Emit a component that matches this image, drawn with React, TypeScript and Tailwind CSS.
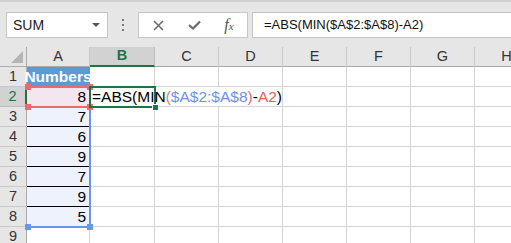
import React from 'react'

const cols = ['A', 'B', 'C', 'D', 'E', 'F', 'G', 'H']
const colW = ['w-[63px]', 'w-[65px]', 'w-[64px]', 'w-[64px]', 'w-[64px]', 'w-[64px]', 'w-[64px]', 'w-[64px]']
const values = ['Numbers', '8', '7', '6', '9', '7', '9', '5', '']

const font = { fontFamily: '"Liberation Sans", Arial, sans-serif' }

function FormulaText() {
  return (
    <span className="whitespace-nowrap text-black">
      =ABS(MIN<span className="text-[#e9785e]">(</span>
      <span className="text-[#6d8ff0]">$A$2:$A$8</span>
      <span className="text-[#e8637a]">)</span>-<span className="text-[#ec5a5f]">A2</span>)
    </span>
  )
}

export default function App() {
  return (
    <div className="h-[243px] w-[511px] overflow-hidden bg-white" style={font}>
      {/* formula bar */}
      <div className="flex h-[47px] items-start border-t-2 border-[#d0d0d0] bg-[#e6e6e6] pt-[10px]">
        <div className="ml-[6px] flex h-[26px] w-[102px] items-center justify-between border border-[#c6c6c6] bg-white pl-[6px] pr-[7px] text-[14px] text-[#222]">
          <span>SUM</span>
          <span className="h-0 w-0 border-x-[4px] border-t-[4px] border-x-transparent border-t-[#555]" />
        </div>
        <div className="flex h-[26px] w-[30px] flex-col items-center justify-center gap-[3px]">
          <span className="h-[2px] w-[2px] bg-[#777]" />
          <span className="h-[2px] w-[2px] bg-[#777]" />
          <span className="h-[2px] w-[2px] bg-[#777]" />
        </div>
        <div className="flex h-[26px] w-[110px] items-center border border-[#c6c6c6] bg-white">
          <div className="flex w-[38px] justify-center">
            <svg width="11" height="11" viewBox="0 0 11 11">
              <path d="M1 1 L10 10 M10 1 L1 10" stroke="#6a6a6a" strokeWidth="1.5" />
            </svg>
          </div>
          <div className="flex w-[34px] justify-center">
            <svg width="13" height="10" viewBox="0 0 13 10">
              <path d="M1 5 L5 8.5 L12 1.5" stroke="#6a6a6a" strokeWidth="2.2" fill="none" />
            </svg>
          </div>
          <div className="flex w-[36px] justify-center">
            <span className="text-[16px] italic text-[#555]" style={{ fontFamily: '"Liberation Serif", serif' }}>
              f<span className="text-[11px]">x</span>
            </span>
          </div>
        </div>
        <div className="ml-[4px] flex h-[26px] flex-1 items-center border border-r-0 border-[#c6c6c6] bg-white pl-[11px] text-[13px] text-[#111]">
          =ABS(MIN($A$2:$A$8)-A2)
        </div>
      </div>

      {/* grid */}
      <div className="relative">
        <div className="flex h-[20px] bg-[#e6e6e6]">
          <div className="relative w-[27px] shrink-0 border-r border-b border-[#ababab]">
            <svg className="absolute right-[3px] bottom-[3px]" width="12" height="12" viewBox="0 0 12 12">
              <path d="M12 0 L12 12 L0 12 Z" fill="#b5b5b5" />
            </svg>
          </div>
          {cols.map((c, i) => (
            <div
              key={c}
              className={`flex shrink-0 items-center justify-center text-[14.5px] ${colW[i]} ${
                c === 'B'
                  ? 'border-r border-b-2 border-r-[#bdbdbd] border-b-[#217346] bg-[#d2d2d2] font-bold text-[#217346]'
                  : 'border-r border-b border-r-[#c8c8c8] border-b-[#ababab] text-[#333]'
              }`}
            >
              {c}
            </div>
          ))}
        </div>

        {values.map((v, r) => {
          const row = r + 1
          return (
            <div key={row} className="flex h-[20px]">
              <div
                className={`flex w-[27px] shrink-0 items-center justify-center text-[14.5px] ${
                  row === 2
                    ? 'border-r-2 border-b border-r-[#217346] border-b-[#bdbdbd] bg-[#d2d2d2] text-[#217346]'
                    : 'border-r border-b border-r-[#ababab] border-b-[#c8c8c8] bg-[#e6e6e6] text-[#333]'
                }`}
              >
                {row}
              </div>
              {cols.map((c, i) => {
                let cls = 'border-r border-b border-[#d4d4d4]'
                let content: React.ReactNode = null
                if (c === 'A') {
                  if (row === 1) {
                    cls = 'bg-[#5b9bd5] border-r border-b border-[#5b9bd5] justify-center font-bold text-white'
                    content = v
                  } else if (row === 2) {
                    cls = 'bg-[#f3e6ee] justify-end pr-[4px] text-black'
                    content = v
                  } else if (row <= 8) {
                    cls = `bg-[#edf2fc] justify-end pr-[4px] text-black border-b ${
                      row < 8 ? 'border-black' : 'border-transparent'
                    }`
                    content = v
                  }
                }
                if (row === 2 && c === 'B') {
                  cls = 'relative z-30 pl-[2px]'
                  content = <FormulaText />
                }
                if (row === 2 && c === 'C') cls = 'border-b border-[#d4d4d4]'
                if (row === 2 && c === 'D') cls = 'border-r border-b border-[#d4d4d4]'
                return (
                  <div
                    key={c}
                    className={`flex shrink-0 items-center text-[15.5px] ${colW[i]} ${cls}`}
                  >
                    {content}
                  </div>
                )
              })}
            </div>
          )
        })}

        {/* reference range $A$2:$A$8 */}
        <div className="pointer-events-none absolute left-[27px] top-[60px] h-[121px] w-[64px] border-r-2 border-b-2 border-[#6b95ea]" />
        <div className="absolute left-[25px] top-[177px] h-[6px] w-[6px] bg-[#6b95ea]" />
        <div className="absolute left-[87px] top-[177px] h-[6px] w-[6px] bg-[#6b95ea]" />

        {/* reference A2 */}
        <div className="pointer-events-none absolute left-[27px] top-[39px] h-[22px] w-[64px] border-y-2 border-[#ea6b6f]" />
        <div className="absolute left-[25px] top-[37px] h-[6px] w-[6px] bg-[#ea6b6f]" />
        <div className="absolute left-[87px] top-[37px] h-[6px] w-[6px] bg-[#ea6b6f]" />
        <div className="absolute left-[25px] top-[57px] h-[6px] w-[6px] bg-[#ea6b6f]" />
        <div className="absolute left-[87px] top-[57px] h-[6px] w-[6px] bg-[#ea6b6f]" />

        {/* active cell B2 */}
        <div className="pointer-events-none absolute left-[89px] top-[39px] z-20 h-[22px] w-[67px] border-2 border-[#217346]" />
        <div className="absolute left-[152px] top-[57px] z-20 h-[7px] w-[7px] border border-white bg-[#217346]" />
      </div>
    </div>
  )
}
